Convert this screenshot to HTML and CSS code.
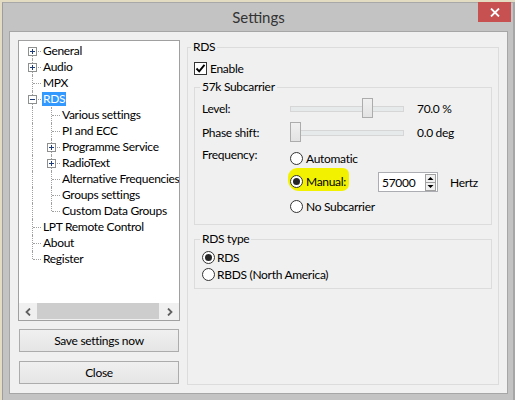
FILE: index.html
```html
<!DOCTYPE html>
<html>
<head>
<meta charset="utf-8">
<link rel="stylesheet" href="styles.css">
</head>
<body>
<div class="desk">
  <div class="window">
    <div class="titlebar">
      <span class="title">Settings</span>
      <span class="close"><svg width="10" height="9" viewBox="0 0 10 9"><path d="M1 0.5 L9 8.5 M9 0.5 L1 8.5" stroke="#fff" stroke-width="1.8"/></svg></span>
    </div>
    <div class="client">
      <div class="leftcol">
        <div class="tree">
          <div class="items">
            <div class="row"><span class="ind first"><svg class="exp" width="9" height="9" viewBox="0 0 9 9"><rect x="0.5" y="0.5" width="8" height="8" fill="#fff" stroke="#8e8f8f"/><path d="M2 4.5 H7 M4.5 2 V7" stroke="#1f3d7a"/></svg></span><span class="lbl">General</span></div>
            <div class="row"><span class="ind tee"><svg class="exp" width="9" height="9" viewBox="0 0 9 9"><rect x="0.5" y="0.5" width="8" height="8" fill="#fff" stroke="#8e8f8f"/><path d="M2 4.5 H7 M4.5 2 V7" stroke="#1f3d7a"/></svg></span><span class="lbl">Audio</span></div>
            <div class="row"><span class="ind tee"></span><span class="lbl">MPX</span></div>
            <div class="row"><span class="ind tee"><svg class="exp" width="9" height="9" viewBox="0 0 9 9"><rect x="0.5" y="0.5" width="8" height="8" fill="#fff" stroke="#8e8f8f"/><path d="M2 4.5 H7" stroke="#1f3d7a"/></svg></span><span class="lbl sel">RDS</span></div>
            <div class="row"><span class="ind pass"></span><span class="ind tee"></span><span class="lbl">Various settings</span></div>
            <div class="row"><span class="ind pass"></span><span class="ind tee"></span><span class="lbl">PI and ECC</span></div>
            <div class="row"><span class="ind pass"></span><span class="ind tee"><svg class="exp" width="9" height="9" viewBox="0 0 9 9"><rect x="0.5" y="0.5" width="8" height="8" fill="#fff" stroke="#8e8f8f"/><path d="M2 4.5 H7 M4.5 2 V7" stroke="#1f3d7a"/></svg></span><span class="lbl">Programme Service</span></div>
            <div class="row"><span class="ind pass"></span><span class="ind tee"><svg class="exp" width="9" height="9" viewBox="0 0 9 9"><rect x="0.5" y="0.5" width="8" height="8" fill="#fff" stroke="#8e8f8f"/><path d="M2 4.5 H7 M4.5 2 V7" stroke="#1f3d7a"/></svg></span><span class="lbl">RadioText</span></div>
            <div class="row"><span class="ind pass"></span><span class="ind tee"></span><span class="lbl">Alternative Frequencies</span></div>
            <div class="row"><span class="ind pass"></span><span class="ind tee"></span><span class="lbl">Groups settings</span></div>
            <div class="row"><span class="ind pass"></span><span class="ind end"></span><span class="lbl">Custom Data Groups</span></div>
            <div class="row"><span class="ind tee"></span><span class="lbl">LPT Remote Control</span></div>
            <div class="row"><span class="ind tee"></span><span class="lbl">About</span></div>
            <div class="row"><span class="ind end"></span><span class="lbl">Register</span></div>
          </div>
          <div class="hscroll">
            <span class="sbtn left"><svg width="6" height="8" viewBox="0 0 6 8"><path d="M5 0.5 L1.5 4 L5 7.5" fill="none" stroke="#606060" stroke-width="1.8"/></svg></span>
            <span class="thumb"></span>
            <span class="sbtn right"><svg width="6" height="8" viewBox="0 0 6 8"><path d="M1 0.5 L4.5 4 L1 7.5" fill="none" stroke="#606060" stroke-width="1.8"/></svg></span>
          </div>
        </div>
        <button class="btn save">Save settings now</button>
        <button class="btn closebtn">Close</button>
      </div>

      <fieldset class="grp main">
        <legend>RDS</legend>
        <label class="chkrow"><span class="chk"><svg width="11" height="11" viewBox="0 0 11 11"><path d="M1.5 5.5 L4.2 8.3 L9.5 1.8" fill="none" stroke="#000" stroke-width="1.9"/></svg></span>Enable</label>

        <fieldset class="grp sub sub1">
          <legend>57k Subcarrier</legend>
          <div class="form">
            <span class="flabel">Level:</span>
            <div class="slider" style="--v:0.7"><span class="handle"></span></div>
            <span class="val">70.0 %</span>

            <span class="flabel">Phase shift:</span>
            <div class="slider" style="--v:0"><span class="handle"></span></div>
            <span class="val">0.0 deg</span>

            <span class="flabel freq">Frequency:</span>
            <div class="radios">
              <div class="ritem"><span class="radio"></span>Automatic</div>
              <div class="ritem">
                <span class="hl"><span class="radio on"></span>Manual:</span>
                <span class="spin"><span class="spinval">57000</span><svg class="spinbtns" width="11" height="17" viewBox="0 0 11 17"><rect x="0.5" y="0.5" width="10" height="16" fill="#f0f0f0" stroke="#a0a0a0"/><path d="M0.5 8.5 H10.5" stroke="#a0a0a0"/><path d="M2.5 6 L5.5 3 L8.5 6 Z M2.5 11 L5.5 14 L8.5 11 Z" fill="#000"/></svg></span>
                <span class="hz">Hertz</span>
              </div>
              <div class="ritem"><span class="radio"></span>No Subcarrier</div>
            </div>
          </div>
        </fieldset>

        <fieldset class="grp sub sub2">
          <legend>RDS type</legend>
          <div class="ritem small"><span class="radio on"></span>RDS</div>
          <div class="ritem small"><span class="radio"></span>RBDS (North America)</div>
        </fieldset>
      </fieldset>
    </div>
  </div>
</div>
</body>
</html>
```

FILE: styles.css
```css
* { box-sizing: border-box; }
html, body { margin: 0; padding: 0; }
body {
  font-family: Lato, "Noto Sans", sans-serif;
  font-size: 12px;
  letter-spacing: -0.3px;
  color: #000;
}

.desk {
  width: 515px;
  height: 400px;
  background: #e3dcc2;
  padding: 2px 0 0 2px;
  overflow: hidden;
}

.window {
  width: 513px;
  height: 398px;
  background: #c3c3c3;
  border-left: 1px solid #9d9d9d;
  border-top: 1px solid #a8a8a8;
  border-right: 2px solid #a6a6a6;
  padding: 0 5px 0 6px;
  display: flex;
  flex-direction: column;
  position: relative;
}

.titlebar {
  height: 28px;
  flex: none;
  display: flex;
  align-items: center;
  justify-content: center;
}
.title {
  font-size: 15px;
  letter-spacing: 0;
  color: #333;
}
.close {
  position: absolute;
  top: -1px;
  right: 2px;
  width: 33px;
  height: 20px;
  background: #c75050;
  display: flex;
  align-items: center;
  justify-content: center;
}

.client {
  height: 363px;
  flex: none;
  border: 1px solid #a6a6a6;
  background: #f0f0f0;
  padding: 8px;
  display: flex;
  gap: 7px;
}

.leftcol {
  width: 162px;
  flex: none;
  display: flex;
  flex-direction: column;
}

.tree {
  height: 281px;
  flex: none;
  border: 1px solid #a0a0a0;
  background: #fff;
  display: flex;
  flex-direction: column;
}
.items {
  flex: 1;
  padding: 2px 0 0 5px;
  overflow: hidden;
}
.row {
  display: flex;
  align-items: center;
  height: 16px;
  white-space: nowrap;
}
.ind {
  position: relative;
  width: 19px;
  height: 16px;
  flex: none;
}
.ind::before {
  content: "";
  position: absolute;
  left: 8px;
  top: 0;
  bottom: 0;
  border-left: 1px dotted #a0a0a0;
}
.ind.first::before { top: 8px; }
.ind.end::before { bottom: 8px; }
.ind.tee::after,
.ind.first::after,
.ind.end::after {
  content: "";
  position: absolute;
  left: 9px;
  width: 8px;
  top: 8px;
  border-top: 1px dotted #a0a0a0;
}
.exp {
  position: absolute;
  left: 4px;
  top: 4px;
  z-index: 1;
  display: block;
}
.lbl {
  margin-left: -1px;
  padding: 0 1px;
  height: 14px;
  line-height: 14px;
}
.lbl.sel {
  background: #3399ff;
  color: #fff;
}

.hscroll {
  height: 17px;
  flex: none;
  display: flex;
  background: #f0f0f0;
}
.sbtn {
  display: flex;
  align-items: center;
  justify-content: center;
  flex: none;
}
.sbtn.left { width: 18px; }
.sbtn.right { width: 19px; }
.thumb {
  flex: 1;
  background: #cdcdcd;
  margin: 0 1px 1px 0;
}

.btn {
  font: inherit;
  letter-spacing: inherit;
  color: #000;
  height: 23px;
  margin: 8px 1px 0;
  border: 1px solid #acacac;
  background: linear-gradient(#f0f0f0, #e5e5e5);
  padding: 0;
}
.btn.closebtn { margin-top: 9px; }

.grp {
  margin: 0;
  border: 1px solid #dcdcdc;
  min-width: 0;
}
.grp > legend {
  padding: 0 2px;
  line-height: 14px;
}
.main {
  width: 312px;
  flex: none;
  padding: 6px 6px 0 6px;
}
.main > legend { margin-left: -3px; }

.chkrow {
  height: 16px;
  display: flex;
  align-items: center;
  gap: 3px;
}
.chk {
  width: 13px;
  height: 13px;
  border: 1px solid #333;
  background: #fff;
  display: flex;
  align-items: center;
  justify-content: center;
}
.chk svg { display: block; }

.sub { margin-top: 4px; }
.sub > legend { margin-left: -2px; }
.sub1 { padding: 2px 7px 6px 7px; }
.sub2 { margin-top: 7px; padding: 3px 7px 5px 7px; }

.form {
  display: grid;
  grid-template-columns: 88px 114px 1fr;
  grid-template-rows: 24px 24px auto;
  align-items: center;
}
.val { padding-left: 13px; white-space: nowrap; }
.freq {
  align-self: start;
  margin-top: 4px;
  line-height: 14px;
}

.slider {
  position: relative;
  height: 20px;
}
.slider::before {
  content: "";
  position: absolute;
  left: 0;
  right: 0;
  top: 8px;
  height: 4px;
  background: #e7eaea;
  border: 1px solid #d6d6d6;
}
.handle {
  position: absolute;
  top: 0;
  left: calc((100% - 11px) * var(--v));
  width: 11px;
  height: 20px;
  border: 1px solid #acacac;
  background: linear-gradient(#f0f0f0, #e3e3e3);
}

.radios {
  grid-column: 2 / 4;
  margin-top: 2px;
  display: flex;
  flex-direction: column;
}
.ritem {
  height: 24px;
  display: flex;
  align-items: center;
  gap: 3px;
  white-space: nowrap;
}
.ritem.small {
  height: 17px;
  gap: 2px;
}
.radio {
  width: 13px;
  height: 13px;
  flex: none;
  border: 1px solid #333;
  border-radius: 50%;
  background: #fff;
  display: flex;
  align-items: center;
  justify-content: center;
}
.radio.on::after {
  content: "";
  width: 7px;
  height: 7px;
  border-radius: 50%;
  background: #262626;
}

.hl {
  align-self: flex-start;
  margin: -2px 0 0 -2px;
  width: 61px;
  height: 23px;
  padding: 3px 0 0 2px;
  display: flex;
  align-items: center;
  gap: 3px;
  background: #f2f200;
  border-radius: 9px 6px 7px 11px;
}
.spin {
  margin-left: 26px;
  width: 60px;
  height: 20px;
  border: 1px solid #abadb3;
  background: #fff;
  display: flex;
  align-items: center;
  justify-content: space-between;
  padding: 0 1px 0 3px;
}
.spinbtns { display: block; }
.hz { margin-left: 9px; }
```
